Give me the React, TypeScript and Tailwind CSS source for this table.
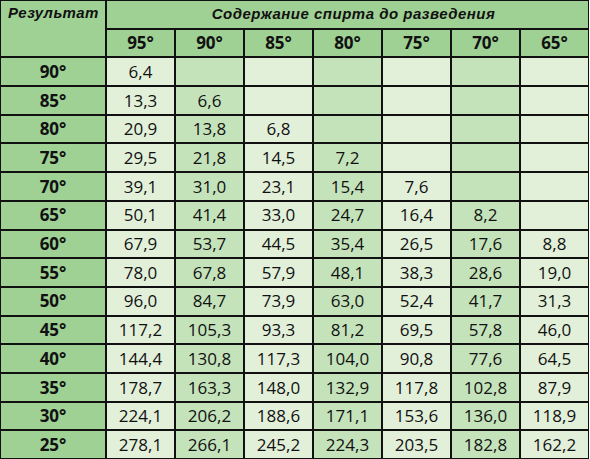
const cols = ['95°', '90°', '85°', '80°', '75°', '70°', '65°']

const rows: { label: string; values: string[] }[] = [
  { label: '90°', values: ['6,4'] },
  { label: '85°', values: ['13,3', '6,6'] },
  { label: '80°', values: ['20,9', '13,8', '6,8'] },
  { label: '75°', values: ['29,5', '21,8', '14,5', '7,2'] },
  { label: '70°', values: ['39,1', '31,0', '23,1', '15,4', '7,6'] },
  { label: '65°', values: ['50,1', '41,4', '33,0', '24,7', '16,4', '8,2'] },
  { label: '60°', values: ['67,9', '53,7', '44,5', '35,4', '26,5', '17,6', '8,8'] },
  { label: '55°', values: ['78,0', '67,8', '57,9', '48,1', '38,3', '28,6', '19,0'] },
  { label: '50°', values: ['96,0', '84,7', '73,9', '63,0', '52,4', '41,7', '31,3'] },
  { label: '45°', values: ['117,2', '105,3', '93,3', '81,2', '69,5', '57,8', '46,0'] },
  { label: '40°', values: ['144,4', '130,8', '117,3', '104,0', '90,8', '77,6', '64,5'] },
  { label: '35°', values: ['178,7', '163,3', '148,0', '132,9', '117,8', '102,8', '87,9'] },
  { label: '30°', values: ['224,1', '206,2', '188,6', '171,1', '153,6', '136,0', '118,9'] },
  { label: '25°', values: ['278,1', '266,1', '245,2', '224,3', '203,5', '182,8', '162,2'] },
]

export default function App() {
  return (
    <div className="w-[590px] h-[459px] bg-white font-['Open_Sans',sans-serif] text-[#111]">
      <div className="grid h-[459px] w-[589px] grid-cols-[104px_repeat(7,1fr)] grid-rows-[repeat(16,1fr)] gap-[2px] bg-[#111] p-[1px]">
        <div className="row-span-2 whitespace-nowrap bg-[#9fd094] px-[7px] pt-[2px] font-['Liberation_Sans',sans-serif] text-[15px] font-bold italic leading-[20px] tracking-[0.5px]">
          Результат
        </div>
        <div className="col-span-7 flex items-center justify-center bg-[#9fd094] pl-[12px] font-['Liberation_Sans',sans-serif] text-[15px] font-bold italic tracking-[0.5px]">
          Содержание спирта до разведения
        </div>
        {cols.map(c => (
          <div key={c} className="flex items-center justify-center bg-[#9fd094] text-[17px] font-bold">{c}</div>
        ))}
        {rows.map(r => (
          <Row key={r.label} label={r.label} values={r.values} />
        ))}
      </div>
    </div>
  )
}

function Row({ label, values }: { label: string; values: string[] }) {
  return (
    <>
      <div className="flex items-center justify-center bg-[#9fd094] text-[17px] font-bold">{label}</div>
      {cols.map((c, i) => (
        <div
          key={c}
          className={`flex items-center justify-center text-[17px] ${i % 2 === 1 ? 'bg-[#c4e3bb]' : 'bg-[#e2f0da]'}`}
        >
          {values[i] ?? ''}
        </div>
      ))}
    </>
  )
}
